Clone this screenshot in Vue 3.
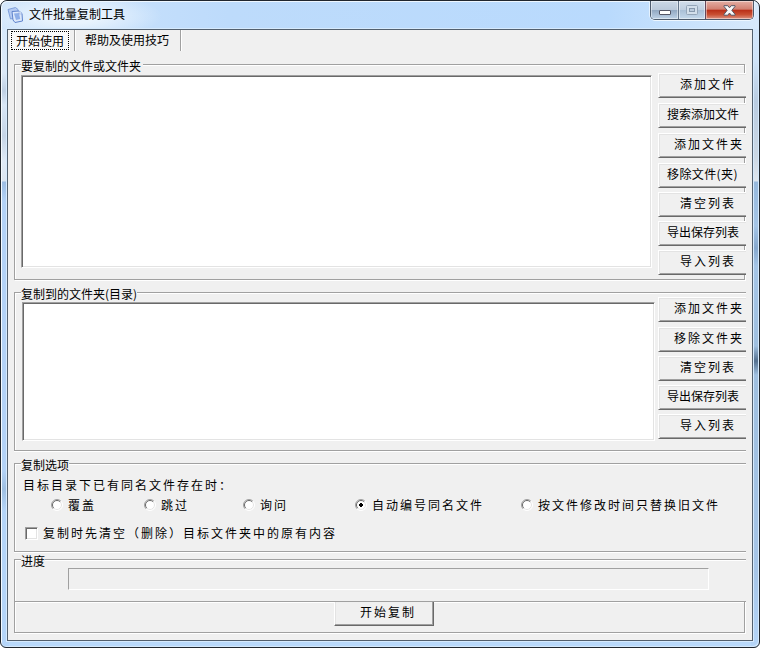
<script setup>
import { ref } from 'vue'

const tabs = ['开始使用', '帮助及使用技巧']
const activeTab = ref(0)

const sourceActions = [
  { label: '添加文件', kind: 'short' },
  { label: '搜索添加文件', kind: 'tight' },
  { label: '添加文件夹', kind: 'long' },
  { label: '移除文件(夹)', kind: 'tight bracketed' },
  { label: '清空列表', kind: 'short' },
  { label: '导出保存列表', kind: 'tight' },
  { label: '导入列表', kind: 'short' },
]
const targetActions = [
  { label: '添加文件夹', kind: 'long' },
  { label: '移除文件夹', kind: 'long' },
  { label: '清空列表', kind: 'short' },
  { label: '导出保存列表', kind: 'tight' },
  { label: '导入列表', kind: 'short' },
]
const modes = ['覆盖', '跳过', '询问', '自动编号同名文件', '按文件修改时间只替换旧文件']
const mode = ref(3)
const clearFirst = ref(false)
</script>

<template>
  <div class="window">
    <header class="titlebar">
      <svg class="app-icon" width="17" height="18" viewBox="0 0 17 18">
        <path d="M1 3.5 8.5 1.5 11 3.5 11.5 11 3.5 13Z" fill="#b4caf2" stroke="#7f9fdb" />
        <path d="M5 5.5 12 5 15 7.5 15.5 15 8 16.5 6 14Z" fill="#dce8fb" stroke="#5f83cc" />
        <path d="M7 7.5 12 7 13.2 13 9 14Z" fill="#8fafe8" />
        <path d="M12 5 12.3 8 15 7.7" fill="#fff" stroke="#86a4de" stroke-width=".7" />
      </svg>
      <h1 class="title">文件批量复制工具</h1>
      <div class="controls">
        <span class="ctl min">
          <svg width="14" height="7" viewBox="0 0 14 7"><rect x="1.5" y="1.5" width="11" height="4" rx=".5" fill="#fff" stroke="#535666" /></svg>
        </span>
        <span class="ctl max">
          <svg width="12" height="10" viewBox="0 0 12 10">
            <rect x=".5" y=".5" width="11" height="9" rx="1" fill="#d3dfeb" stroke="#94a5b8" />
            <rect x="3.5" y="3.5" width="5" height="3" fill="#bccbdc" stroke="#8799ad" />
          </svg>
        </span>
        <span class="ctl close">
          <svg width="13" height="11" viewBox="0 0 13 11">
            <path d="M1 .7H4.8L6.5 2.8 8.2.7H12V1.5L8.8 5.3 12 9.3V10.2H8.2L6.5 8 4.8 10.2H1V9.3L4.2 5.3 1 1.5Z" fill="#f8f8f8" stroke="#565765" />
          </svg>
        </span>
      </div>
    </header>

    <main class="client">
      <nav class="tabs">
        <div v-for="(tab, i) in tabs" :key="tab" class="tab" :class="{ active: i === activeTab }" @click="activeTab = i">
          <span>{{ tab }}</span>
        </div>
      </nav>

      <section class="group source">
        <h2 class="legend">要复制的文件或文件夹</h2>
        <div class="listbox"></div>
        <div class="actions">
          <button v-for="a in sourceActions" :key="a.label" class="action" :class="a.kind">{{ a.label }}</button>
        </div>
      </section>

      <section class="group target">
        <h2 class="legend">复制到的文件夹(目录)</h2>
        <div class="listbox"></div>
        <div class="actions">
          <button v-for="a in targetActions" :key="a.label" class="action" :class="a.kind">{{ a.label }}</button>
        </div>
      </section>

      <section class="group options">
        <h2 class="legend">复制选项</h2>
        <p class="question">目标目录下已有同名文件存在时：</p>
        <div class="modes">
          <label v-for="(m, i) in modes" :key="m" class="mode" @click="mode = i">
            <svg width="12" height="12" viewBox="0 0 12 12">
              <circle cx="6" cy="6" r="5" fill="#fff" />
              <path d="M2.1 9.9A5.5 5.5 0 0 1 9.9 2.1" fill="none" stroke="#a0a0a0" />
              <path d="M2.8 9.2A4.5 4.5 0 0 1 9.2 2.8" fill="none" stroke="#696969" />
              <path d="M2.8 9.2A4.5 4.5 0 0 0 9.2 2.8" fill="none" stroke="#e3e3e3" />
              <path d="M2.1 9.9A5.5 5.5 0 0 0 9.9 2.1" fill="none" stroke="#fff" />
              <path v-if="i === mode" d="M5 4h2v1h1v2h-1v1h-2v-1h-1v-2h1z" fill="#000" />
            </svg>
            <span>{{ m }}</span>
          </label>
        </div>
        <label class="check" @click="clearFirst = !clearFirst">
          <span class="box"></span>
          <span>复制时先清空（删除）目标文件夹中的原有内容</span>
        </label>
      </section>

      <section class="group progress">
        <h2 class="legend">进度</h2>
        <div class="bar"></div>
      </section>

      <footer class="footer">
        <button class="start">开始复制</button>
      </footer>
    </main>
  </div>
</template>

<style>
body {
  background: #fff;
}
</style>

<style scoped>
* {
  box-sizing: border-box;
}
.window {
  width: 760px;
  height: 648px;
  padding: 0 6px 6px;
  display: flex;
  flex-direction: column;
  border: 1px solid #20262e;
  border-radius: 7px 7px 6px 6px;
  box-shadow: inset 1px 1px 0 #f4faff, inset -1px -1px 0 #d5e9fc;
  background:
    linear-gradient(180deg, #d4e8fd 0, #dce9f7 72px, #bfd0e4 90px, #d9e7f6 104px, #c6d5e7 135px, #dfeaf6 160px, #dbe5f0 180px, #9dbde3 181px, #b3d2f6 200px, #b3d2f6 470px, #9ebfe2 488px, #b5d5f8 510px) left / 8px 100% no-repeat,
    linear-gradient(180deg, #d4e8fd 0, #cfe3f8 60px, #b9cce1 100px, #cbd7e4 155px, #dfe6ee 180px, #96b8dc 181px, #a5c5e6 225px, #86a8ce 247px, #a5c5e6 265px, #9fbfdf 345px, #54708f 360px, #9fbfdf 374px, #a6c5e7 570px, #b5d5f8) right / 8px 100% no-repeat,
    #b9d9fb;
  color: #000;
  font-family: "Noto Sans CJK SC", sans-serif;
  font-size: 12px;
  line-height: 16px;
}
h1, h2, p {
  margin: 0;
  font-size: 12px;
  font-weight: 400;
}
button {
  font: inherit;
  color: #000;
  border-radius: 0;
  white-space: nowrap;
}

.titlebar {
  flex: none;
  height: 28px;
  margin: 0 -5px;
  padding-left: 5px;
  display: flex;
  align-items: flex-start;
  border-top: 1px solid #eef7ff;
  border-radius: 6px 6px 0 0;
  background:
    radial-gradient(ellipse 90px 24px at 70px 14px, #e8f3fd 30%, transparent),
    linear-gradient(90deg, #cfe4fb 0, #bddbfb 30%, #b9dafd 80%, #d7e9fb);
}
.app-icon {
  margin: 4px 5px 0 0;
}
.title {
  margin-top: 4px;
}
.controls {
  display: flex;
  width: 104px;
  height: 19px;
  margin: -1px 4px 0 auto;
  border: 1px solid #4d5b6d;
  border-top: 0;
  border-radius: 0 0 5px 5px;
  box-shadow: 0 1px 0 #eef7ff, 1px 0 0 #e5f2fe, -1px 0 0 #e5f2fe;
  overflow: hidden;
}
.ctl {
  display: flex;
  align-items: center;
  justify-content: center;
  box-shadow: inset 0 0 0 1px rgba(255, 255, 255, .45);
  background: linear-gradient(#cbd8e6 0, #bac9da 48%, #91a7c1 50%, #bed2e7);
}
.min {
  width: 28px;
  padding-top: 5px;
  border-right: 1px solid #64758a;
}
.max {
  width: 27px;
  background: linear-gradient(#d2deeb 0, #bfcfe0 48%, #a9bfd6 50%, #c4d8eb);
  border-right: 1px solid #65475a;
}
.close {
  flex: 1;
  background: linear-gradient(#e4aea4 0, #d17f70 46%, #b92e17 50%, #c94f32 75%, #dc9382);
}

.client {
  flex: 1;
  display: flex;
  flex-direction: column;
  background: #f0f0f0;
  border: 1px solid #53606e;
  box-shadow: 0 0 0 1px #d6eafd;
}
.tabs {
  display: flex;
  height: 34px;
  align-items: flex-start;
}
.tab {
  height: 21px;
  padding: 2px 11px 0 10px;
  border-right: 1px solid #a0a0a0;
  box-shadow: 1px 0 0 #fff;
}
.tab.active {
  width: 67px;
  margin: 0;
  padding: 1px 0 0 3px;
}
.tab.active span {
  display: block;
  width: 58px;
  height: 19px;
  padding-left: 4px;
  line-height: 18px;
  background: #f9f9f9;
  border: 1px dotted #000;
  box-shadow: 0 0 0 1px #fff;
}

.group {
  flex: none;
  display: flex;
  margin-left: 6px;
  width: 732px;
  border: 1px solid #a0a0a0;
  border-right: 0;
  box-shadow: inset 1px 1px 0 #fff, 0 1px 0 #fff;
}
.legend {
  align-self: flex-start;
  flex: none;
  height: 14px;
  margin: -7px 0 0 6px;
  line-height: 15px;
  background: #f0f0f0;
  white-space: nowrap;
}
.listbox {
  flex: none;
  background: #fff;
  border: 1px solid;
  border-color: #a0a0a0 #fff #fff #a0a0a0;
  box-shadow: inset 1px 1px 0 #696969, inset -1px -1px 0 #e3e3e3;
}
.source {
  width: 731px;
  height: 216px;
  border-right: 1px solid #a0a0a0;
  box-shadow: inset 1px 1px 0 #fff, 1px 1px 0 #fff;
}
.source .legend {
  width: 122px;
  margin-right: -128px;
}
.target .legend {
  width: 116px;
  margin-right: -122px;
}
.source .listbox {
  width: 631px;
  height: 193px;
  margin: 10px 0 0 6px;
}
.target {
  height: 159px;
  margin-top: 12px;
}
.target .listbox {
  width: 633px;
  height: 139px;
  margin: 9px 0 0 7px;
}
.actions {
  flex: none;
  display: grid;
  width: 88px;
  align-content: start;
}
.source .actions {
  margin: 8px -2px 0 6px;
  grid-template-rows: 30px 30px 30px 29px 29px 29px 25px;
}
.target .actions {
  margin: 4px 0 0 3px;
  grid-template-rows: 30px 29px 29px 29px 25px;
}
.action {
  height: 25px;
  padding: 0 0 3px;
  text-align: left;
  background: #f0f0f0;
  border: solid;
  border-width: 1px 0 1px 1px;
  border-color: #fff #fff #696969;
  box-shadow: inset 1px 1px 0 #e3e3e3, inset 0 -1px 0 #a0a0a0;
  line-height: 20px;
}
.short {
  padding-left: 21px;
  letter-spacing: 2px;
}
.long {
  padding-left: 15px;
  letter-spacing: 2px;
}
.tight {
  padding-left: 8px;
}
.bracketed {
  letter-spacing: .4px;
}

.options {
  height: 89px;
  margin-top: 12px;
  flex-direction: column;
}
.question {
  margin: 6px 0 0 8px;
  letter-spacing: 2px;
}
.modes {
  display: grid;
  grid-template-columns: 93px 99px 112px 166px auto;
  margin: 4px 0 0 36px;
}
.mode {
  display: flex;
  align-items: center;
  gap: 5px;
  letter-spacing: 2px;
  white-space: nowrap;
}
.check {
  display: flex;
  align-items: center;
  gap: 5px;
  margin: 12px 0 0 10px;
  letter-spacing: 2px;
}
.box {
  width: 13px;
  height: 13px;
  background: #fff;
  border: 1px solid;
  border-color: #a0a0a0 #fff #fff #a0a0a0;
  box-shadow: inset 1px 1px 0 #696969, inset -1px -1px 0 #e3e3e3;
}

.progress {
  height: 43px;
  margin-top: 7px;
}
.bar {
  width: 641px;
  height: 22px;
  margin: 8px 0 0 23px;
  border: 1px solid;
  border-color: #a0a0a0 #fff #fff #a0a0a0;
}
.footer {
  flex: none;
  width: 731px;
  height: 31px;
  margin-left: 6px;
  border: 1px solid #a0a0a0;
  border-top: 0;
  box-shadow: inset 1px 1px 0 #fff, 1px 1px 0 #fff;
}
.start {
  display: block;
  width: 100px;
  height: 24px;
  margin-left: 319px;
  padding: 0 0 3px 25px;
  text-align: left;
  letter-spacing: 2px;
  line-height: 18px;
  background: #f0f0f0;
  border: solid;
  border-width: 0 1px 1px 1px;
  border-color: #fff #696969 #696969 #fff;
  box-shadow: inset -1px -1px 0 #a0a0a0, inset 1px 0 0 #e3e3e3;
}
</style>
